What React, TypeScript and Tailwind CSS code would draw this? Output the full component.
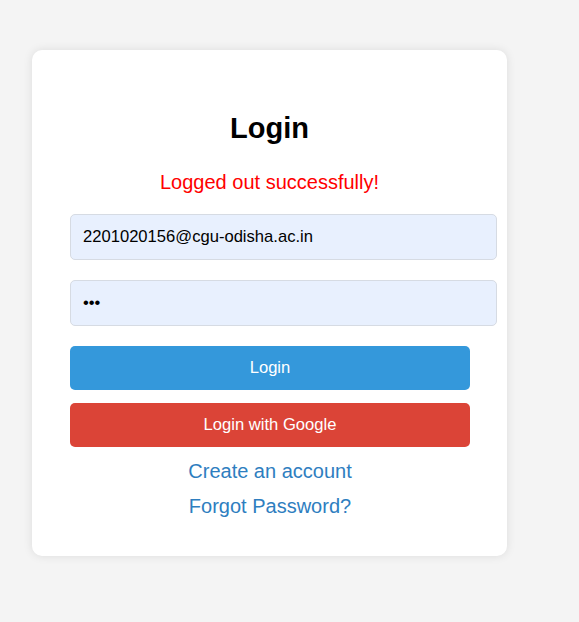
import React from "react";

// Login card — "logged out" state

export default function App() {
  return (
    <div
      className="min-h-[622px] w-full bg-[#f4f4f4] pt-[50px] pl-[32px]"
      style={{ fontFamily: '"Liberation Sans", Arial, sans-serif' }}
    >
      <div className="flex h-[506px] w-[475px] flex-col rounded-[10px] bg-white px-[38px] pt-[61px] shadow-[0_0_10px_rgba(0,0,0,0.1)]">
        <h2 className="text-center text-[29px] font-bold leading-[34px] text-black">
          Login
        </h2>

        <p className="mt-[25px] text-center text-[20px] leading-[24px] text-[#ff0000]">
          Logged out successfully!
        </p>

        <input
          type="email"
          defaultValue="2201020156@cgu-odisha.ac.in"
          className="mt-[20px] h-[46px] w-[427px] rounded-[5px] border border-[#d6dbe3] bg-[#e8f0fe] px-[12px] text-[16.6px] text-black outline-none"
        />
        <input
          type="password"
          defaultValue="abc"
          className="mt-[20px] h-[46px] w-[427px] rounded-[5px] border border-[#d6dbe3] bg-[#e8f0fe] px-[12px] text-[16.6px] text-black outline-none"
        />

        <button className="mt-[20px] h-[44px] w-[400px] rounded-[5px] bg-[#3498db] text-[16.6px] text-white">
          Login
        </button>
        <button className="mt-[13px] h-[44px] w-[400px] rounded-[5px] bg-[#db4437] text-[16.6px] text-white">
          Login with Google
        </button>

        <div className="w-[400px] text-center">
          <a className="mt-[12px] block text-[20px] leading-[24px] text-[#2e7ebf]" href="#">
            Create an account
          </a>
          <a className="mt-[11px] block text-[20px] leading-[24px] text-[#2e7ebf]" href="#">
            Forgot Password?
          </a>
        </div>
      </div>
    </div>
  );
}
